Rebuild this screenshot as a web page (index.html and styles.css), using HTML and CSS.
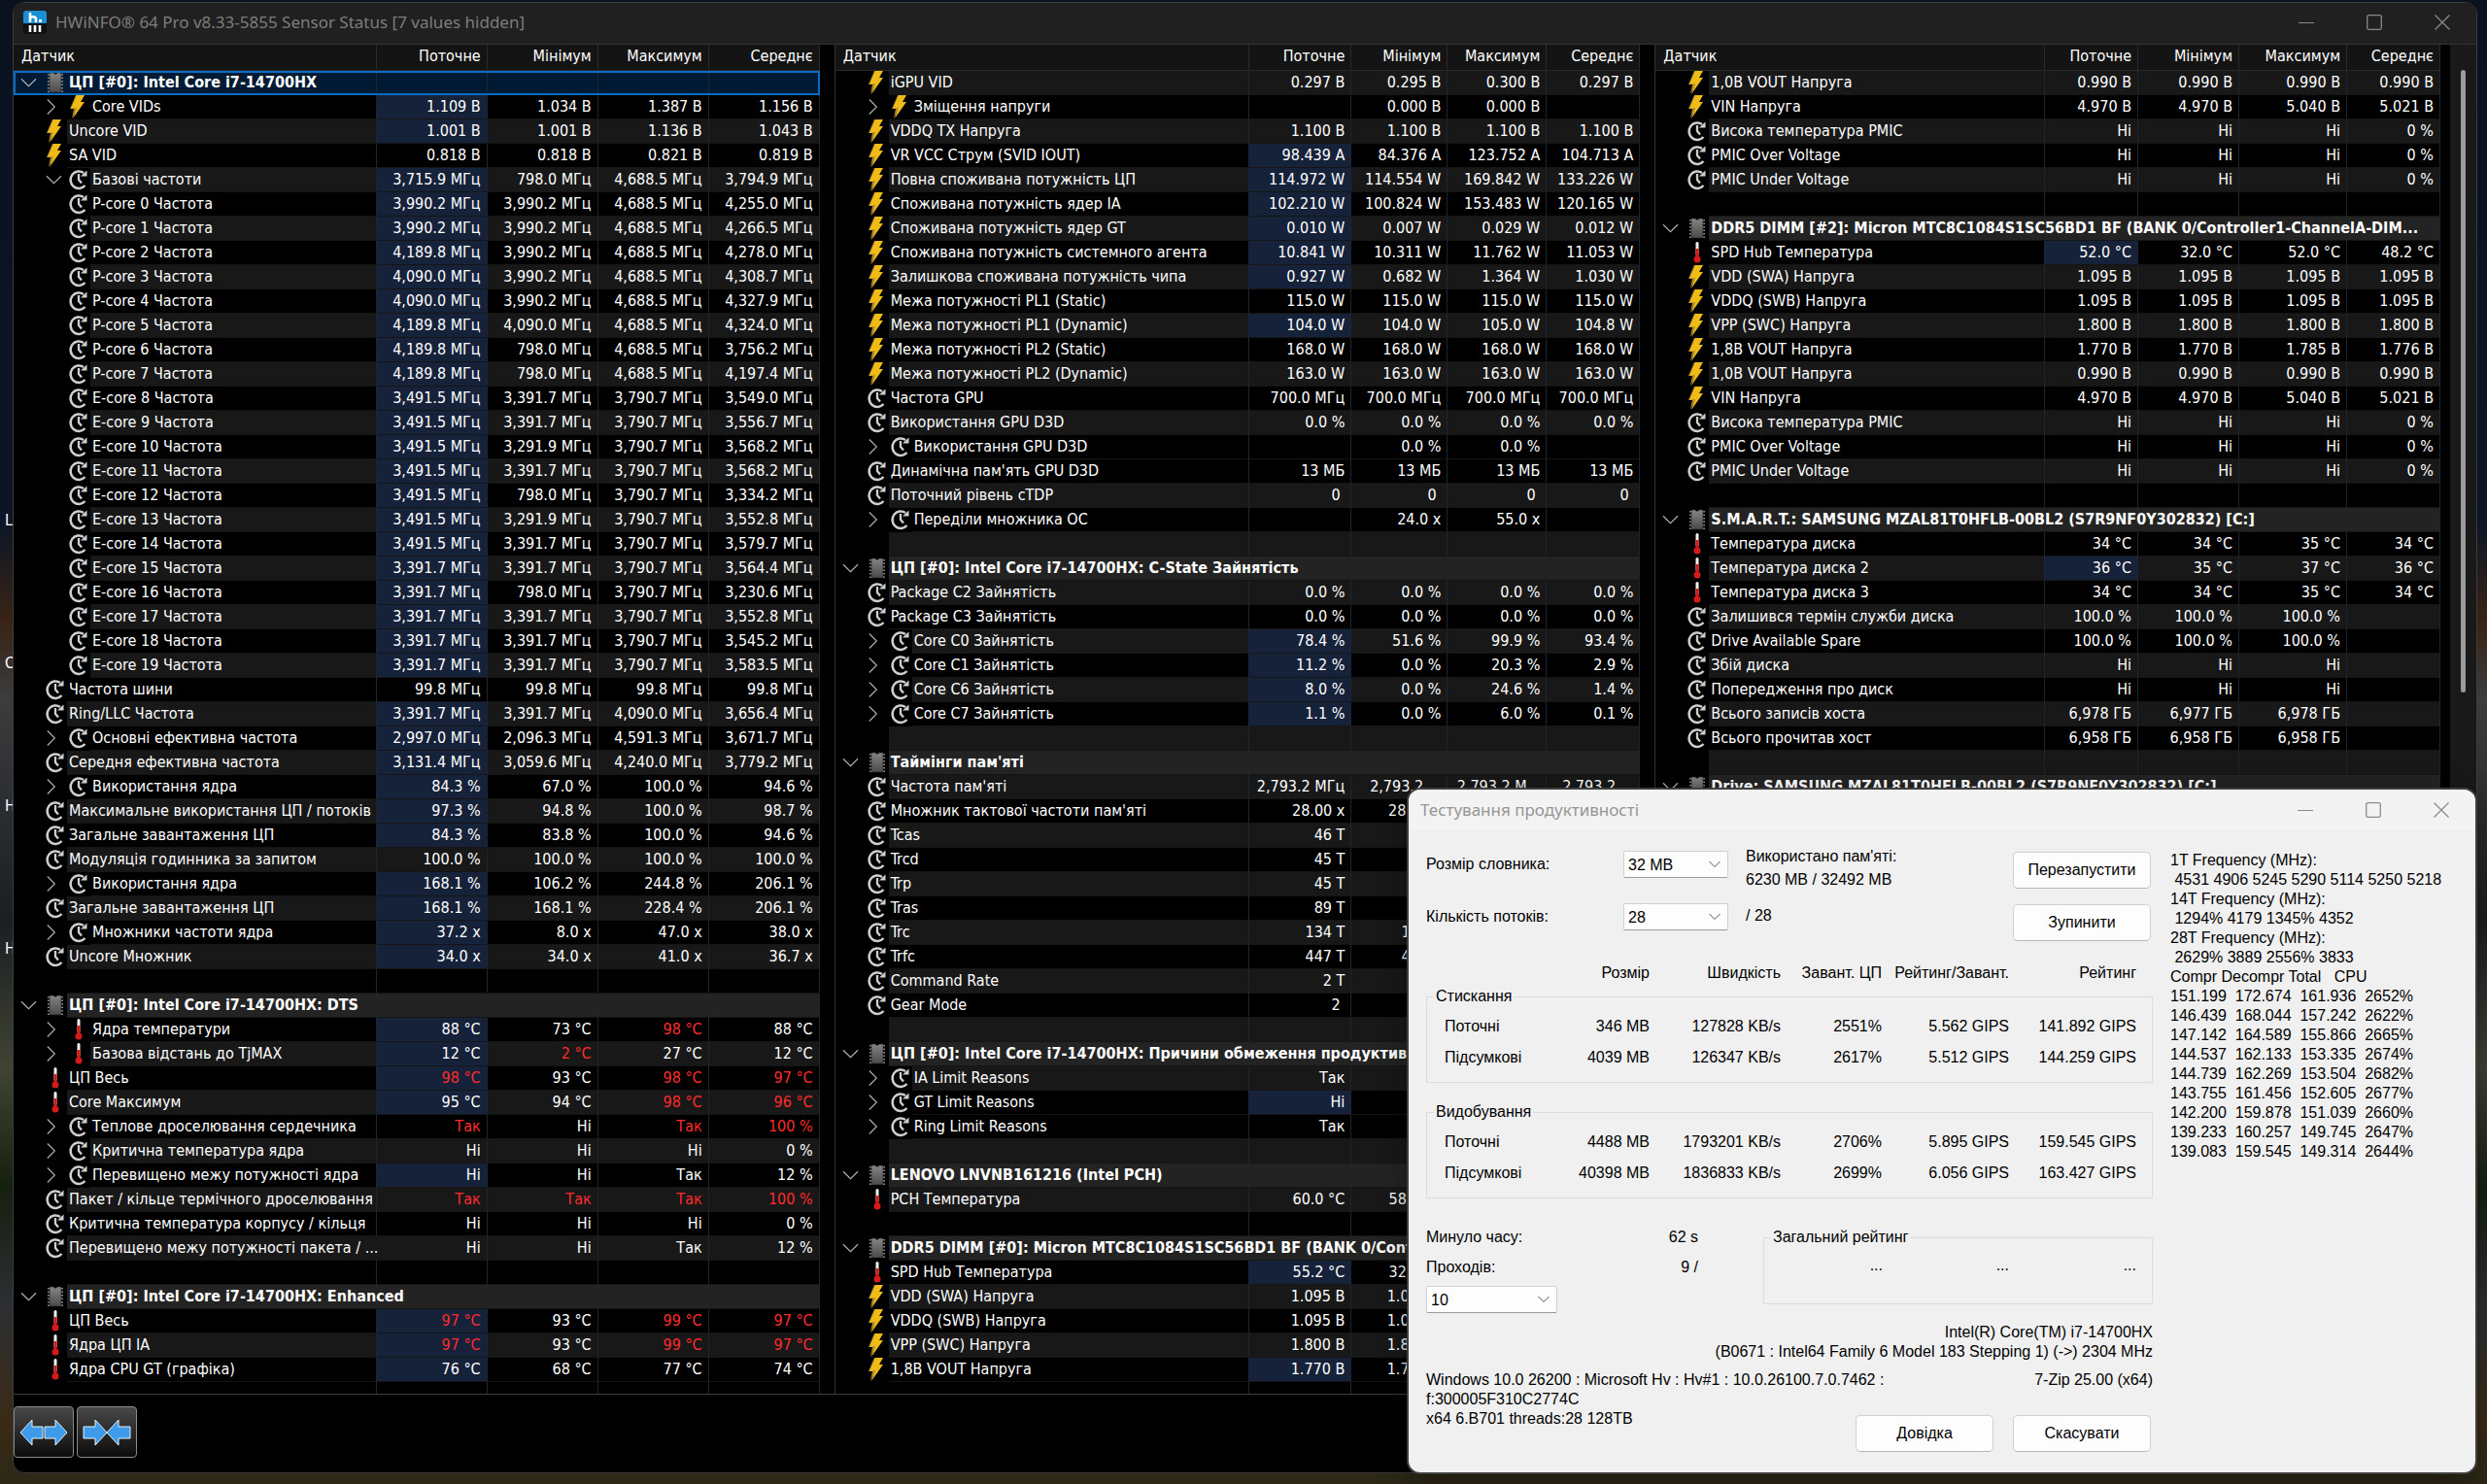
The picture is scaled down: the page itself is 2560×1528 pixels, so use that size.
FILE: index.html
```html
<!doctype html>
<html lang="uk">
<head>
    <meta charset="UTF-8">
    <title>HWiNFO Sensor Status</title>
    <link rel="stylesheet" href="styles.css">
</head>
<body>
    <svg class="sprite" aria-hidden="true">
        <defs>
            <linearGradient id="chip-body" x1="0" y1="0" x2="0" y2="1">
                <stop offset="0" stop-color="#858585"/>
                <stop offset="1" stop-color="#4a4a4a"/>
            </linearGradient>
        </defs>
        <symbol id="bolt" viewBox="0 0 24 24">
            <path fill="#a98a3a" d="M9 0h3L8 12l3 1-6 11 2-10H3z"/>
            <path fill="#f1bb16" d="M10 0h8l-4 7h4L6 24l4-11-6 1z"/>
        </symbol>
        <symbol id="clock" viewBox="0 0 24 24">
            <path fill="none" stroke="#cfcfcf" stroke-width="2.500" d="M17 5A8.500 8.800 0 1 0 18.500 18"/>
            <path fill="#cfcfcf" d="M14 8.500h6.500V2.500z"/>
            <path fill="none" stroke="#cfcfcf" stroke-width="2.300" d="M12 6V12l3 3.500"/>
        </symbol>
        <symbol id="chip" viewBox="0 0 24 24">
            <path stroke="#8d8d8d" stroke-width="16" stroke-dasharray="1.500 2" d="M12 3v19"/>
            <path fill="url(#chip-body)" stroke="#222" stroke-width=".6" d="M6 2h4.500a1.500 1.500 0 0 0 3 0H18v20H6z"/>
        </symbol>
        <symbol id="temp" viewBox="0 0 24 24">
            <rect x="10.500" y="1" width="3" height="14" rx="1.500" fill="#f2f2f2"/>
            <rect x="10.500" y="8" width="3" height="10" fill="#d61a1a"/>
            <circle cx="12" cy="19" r="3.500" fill="#d61a1a"/>
        </symbol>
        <symbol id="down" viewBox="0 0 24 24">
            <path fill="none" stroke="#b5b5b5" stroke-width="1.300" d="M3 7.500l9 9 9-9"/>
        </symbol>
        <symbol id="right" viewBox="0 0 24 24">
            <path fill="none" stroke="#b5b5b5" stroke-width="1.300" d="M4 3l9 9-9 9"/>
        </symbol>
        <symbol id="minimize" viewBox="0 0 16 16"><path stroke="currentColor" d="M0 8.500h16"/></symbol>
        <symbol id="maximize" viewBox="0 0 16 16"><rect x=".7" y=".7" width="14.600" height="14.600" rx="1.500" fill="none" stroke="currentColor" stroke-width="1.300"/></symbol>
        <symbol id="close" viewBox="0 0 16 16"><path fill="none" stroke="currentColor" stroke-width="1.300" d="M.5.5l15 15M15.500.5l-15 15"/></symbol>
    </svg>

    <div class="desktop-labels" aria-hidden="true">
        <span>L</span>
        <span>C</span>
        <span>H</span>
        <span>H</span>
    </div>

    <main class="window">
        <header class="titlebar">
            <svg class="app-icon" viewBox="0 0 24 24">
                <rect width="24" height="24" rx="3" fill="#111"/>
                <path fill="#1b8fd6" d="M3 0h18a3 3 0 0 1 3 3v10H0V3a3 3 0 0 1 3-3z"/>
                <path fill="none" stroke="#fff" stroke-width="2.600" d="M7 2v10M7 8.500c0-3 6-3 6 0V12"/>
                <rect x="16" y="9" width="3" height="3" fill="#fff"/>
                <path stroke="#fff" stroke-width="2.600" d="M7 15v7M12 15v7M17 15v7"/>
            </svg>
            <h1>HWiNFO® 64 Pro v8.33-5855 Sensor Status [7 values hidden]</h1>
            <div class="window-controls">
                <button type="button" aria-label="Згорнути"><svg><use href="#minimize"/></svg></button>
                <button type="button" aria-label="Розгорнути"><svg><use href="#maximize"/></svg></button>
                <button type="button" aria-label="Закрити"><svg><use href="#close"/></svg></button>
            </div>
        </header>

        <div class="panels">
            <section class="panel panel-a"><table id="panel-a"></table></section>
            <section class="panel panel-b"><table id="panel-b"></table></section>
            <section class="panel panel-c">
                <table id="panel-c"></table>
                <div class="scrollbar"><div class="thumb"></div></div>
            </section>
        </div>

        <footer class="toolbar">
            <button type="button" aria-label="Розширити">
                <svg viewBox="0 0 50 28"><path d="M1 14L13 1v7h11v12H13v7zM49 14L37 1v7H26v12h11v7z"/></svg>
            </button>
            <button type="button" aria-label="Звузити">
                <svg viewBox="0 0 50 28"><path d="M25 14L13 1v7H1v12h12v7zM25 14L37 1v7h12v12H37v7z"/></svg>
            </button>
        </footer>
    </main>

    <div class="dialog" role="dialog" aria-labelledby="dialog-title">
        <header class="dialog-title">
            <h2 id="dialog-title">Тестування продуктивності</h2>
            <div class="window-controls">
                <button type="button" aria-label="Згорнути"><svg><use href="#minimize"/></svg></button>
                <button type="button" aria-label="Розгорнути"><svg><use href="#maximize"/></svg></button>
                <button type="button" aria-label="Закрити"><svg><use href="#close"/></svg></button>
            </div>
        </header>
        <div class="dialog-body">
            <form class="bench">
                <div class="settings">
                    <label for="dict">Розмір словника:</label>
                    <select id="dict"><option>32 MB</option></select>
                    <p>Використано пам'яті:<br>6230 MB / 32492 MB</p>
                    <button type="button" class="btn">Перезапустити</button>
                    <label for="threads">Кількість потоків:</label>
                    <select id="threads"><option>28</option></select>
                    <p class="single">/ 28</p>
                    <button type="button" class="btn">Зупинити</button>
                </div>

                <table class="results results-head">
                    <tr><th></th><th>Розмір</th><th>Швидкість</th><th>Завант. ЦП</th><th>Рейтинг/Завант.</th><th>Рейтинг</th></tr>
                </table>
                <fieldset>
                    <legend>Стискання</legend>
                    <table class="results">
                        <tr><th>Поточні</th><td>346 MB</td><td>127828 KB/s</td><td>2551%</td><td>5.562 GIPS</td><td>141.892 GIPS</td></tr>
                        <tr><th>Підсумкові</th><td>4039 MB</td><td>126347 KB/s</td><td>2617%</td><td>5.512 GIPS</td><td>144.259 GIPS</td></tr>
                    </table>
                </fieldset>
                <fieldset>
                    <legend>Видобування</legend>
                    <table class="results">
                        <tr><th>Поточні</th><td>4488 MB</td><td>1793201 KB/s</td><td>2706%</td><td>5.895 GIPS</td><td>159.545 GIPS</td></tr>
                        <tr><th>Підсумкові</th><td>40398 MB</td><td>1836833 KB/s</td><td>2699%</td><td>6.056 GIPS</td><td>163.427 GIPS</td></tr>
                    </table>
                </fieldset>

                <div class="summary">
                    <div class="progress">
                        <div class="pair"><span>Минуло часу:</span><span>62 s</span></div>
                        <div class="pair"><label for="passes">Проходів:</label><span>9 /</span></div>
                        <select id="passes"><option>10</option></select>
                    </div>
                    <fieldset>
                        <legend>Загальний рейтинг</legend>
                        <div class="totals"><span>...</span><span>...</span><span>...</span></div>
                    </fieldset>
                </div>

                <p class="cpu">Intel(R) Core(TM) i7-14700HX<br>(B0671 : Intel64 Family 6 Model 183 Stepping 1) (-&gt;) 2304 MHz</p>
                <div class="system">
                    <p>Windows 10.0 26200 : Microsoft Hv : Hv#1 : 10.0.26100.7.0.7462 :<br>f:300005F310C2774C<br>x64 6.B701 threads:28 128TB</p>
                    <p>7-Zip 25.00 (x64)</p>
                </div>
                <div class="actions">
                    <button type="button" class="btn">Довідка</button>
                    <button type="button" class="btn">Скасувати</button>
                </div>
            </form>
            <pre class="log">1T Frequency (MHz):
 4531 4906 5245 5290 5114 5250 5218
14T Frequency (MHz):
 1294% 4179 1345% 4352
28T Frequency (MHz):
 2629% 3889 2556% 3833
Compr Decompr Total   CPU
151.199  172.674  161.936  2652%
146.439  168.044  157.242  2622%
147.142  164.589  155.866  2665%
144.537  162.133  153.335  2674%
144.739  162.269  153.504  2682%
143.755  161.456  152.605  2677%
142.200  159.878  151.039  2660%
139.233  160.257  149.745  2647%
139.083  159.545  149.314  2644%</pre>
        </div>
    </div>

    <script src="sensors.js"></script>
</body>
</html>
```
FILE: sensors.js
```js
// One line per row: kind|icon|name|current|minimum|maximum|average
// kinds: g group, s sensor, x collapsed, o expanded, c child, - spacer
// "=" after the kind keeps the stripe of the row above,
// "*" marks a value that has just changed, "!" marks a value over its limit
const sensors = {
    'panel-a': `
g!|chip|ЦП [#0]: Intel Core i7-14700HX
x|bolt|Core VIDs|*1.109 В|1.034 В|1.387 В|1.156 В
s|bolt|Uncore VID|*1.001 В|1.001 В|1.136 В|1.043 В
s|bolt|SA VID|0.818 В|0.818 В|0.821 В|0.819 В
o|clock|Базові частоти|*3,715.9 МГц|798.0 МГц|4,688.5 МГц|3,794.9 МГц
c|clock|P-core 0 Частота|*3,990.2 МГц|3,990.2 МГц|4,688.5 МГц|4,255.0 МГц
c|clock|P-core 1 Частота|*3,990.2 МГц|3,990.2 МГц|4,688.5 МГц|4,266.5 МГц
c|clock|P-core 2 Частота|*4,189.8 МГц|3,990.2 МГц|4,688.5 МГц|4,278.0 МГц
c|clock|P-core 3 Частота|*4,090.0 МГц|3,990.2 МГц|4,688.5 МГц|4,308.7 МГц
c|clock|P-core 4 Частота|*4,090.0 МГц|3,990.2 МГц|4,688.5 МГц|4,327.9 МГц
c|clock|P-core 5 Частота|*4,189.8 МГц|4,090.0 МГц|4,688.5 МГц|4,324.0 МГц
c|clock|P-core 6 Частота|*4,189.8 МГц|798.0 МГц|4,688.5 МГц|3,756.2 МГц
c|clock|P-core 7 Частота|*4,189.8 МГц|798.0 МГц|4,688.5 МГц|4,197.4 МГц
c|clock|E-core 8 Частота|*3,491.5 МГц|3,391.7 МГц|3,790.7 МГц|3,549.0 МГц
c|clock|E-core 9 Частота|*3,491.5 МГц|3,391.7 МГц|3,790.7 МГц|3,556.7 МГц
c|clock|E-core 10 Частота|*3,491.5 МГц|3,291.9 МГц|3,790.7 МГц|3,568.2 МГц
c|clock|E-core 11 Частота|*3,491.5 МГц|3,391.7 МГц|3,790.7 МГц|3,568.2 МГц
c|clock|E-core 12 Частота|*3,491.5 МГц|798.0 МГц|3,790.7 МГц|3,334.2 МГц
c|clock|E-core 13 Частота|*3,491.5 МГц|3,291.9 МГц|3,790.7 МГц|3,552.8 МГц
c|clock|E-core 14 Частота|*3,491.5 МГц|3,391.7 МГц|3,790.7 МГц|3,579.7 МГц
c|clock|E-core 15 Частота|*3,391.7 МГц|3,391.7 МГц|3,790.7 МГц|3,564.4 МГц
c|clock|E-core 16 Частота|*3,391.7 МГц|798.0 МГц|3,790.7 МГц|3,230.6 МГц
c|clock|E-core 17 Частота|*3,391.7 МГц|3,391.7 МГц|3,790.7 МГц|3,552.8 МГц
c|clock|E-core 18 Частота|*3,391.7 МГц|3,391.7 МГц|3,790.7 МГц|3,545.2 МГц
c|clock|E-core 19 Частота|*3,391.7 МГц|3,391.7 МГц|3,790.7 МГц|3,583.5 МГц
s|clock|Частота шини|99.8 МГц|99.8 МГц|99.8 МГц|99.8 МГц
s|clock|Ring/LLC Частота|*3,391.7 МГц|3,391.7 МГц|4,090.0 МГц|3,656.4 МГц
x|clock|Основні ефективна частота|*2,997.0 МГц|2,096.3 МГц|4,591.3 МГц|3,671.7 МГц
s|clock|Середня ефективна частота|*3,131.4 МГц|3,059.6 МГц|4,240.0 МГц|3,779.2 МГц
x|clock|Використання ядра|*84.3 %|67.0 %|100.0 %|94.6 %
s|clock|Максимальне використання ЦП / потоків|*97.3 %|94.8 %|100.0 %|98.7 %
s|clock|Загальне завантаження ЦП|*84.3 %|83.8 %|100.0 %|94.6 %
s|clock|Модуляція годинника за запитом|100.0 %|100.0 %|100.0 %|100.0 %
x|clock|Використання ядра|*168.1 %|106.2 %|244.8 %|206.1 %
s|clock|Загальне завантаження ЦП|*168.1 %|168.1 %|228.4 %|206.1 %
x|clock|Множники частоти ядра|*37.2 x|8.0 x|47.0 x|38.0 x
s|clock|Uncore Множник|*34.0 x|34.0 x|41.0 x|36.7 x
-
g|chip|ЦП [#0]: Intel Core i7-14700HX: DTS
x|temp|Ядра температури|*88 °C|73 °C|!98 °C|88 °C
x|temp|Базова відстань до TjMAX|*12 °C|!2 °C|27 °C|12 °C
s|temp|ЦП Весь|*!98 °C|93 °C|!98 °C|!97 °C
s|temp|Core Максимум|*95 °C|94 °C|!98 °C|!96 °C
x|clock|Теплове дроселювання сердечника|!Так|Ні|!Так|!100 %
x|clock|Критична температура ядра|Ні|Ні|Ні|0 %
x|clock|Перевищено межу потужності ядра|*Ні|Ні|Так|12 %
s|clock|Пакет / кільце термічного дроселювання|!Так|!Так|!Так|!100 %
s|clock|Критична температура корпусу / кільця|Ні|Ні|Ні|0 %
s|clock|Перевищено межу потужності пакета / ...|Ні|Ні|Так|12 %
-
g|chip|ЦП [#0]: Intel Core i7-14700HX: Enhanced
s|temp|ЦП Весь|*!97 °C|93 °C|!99 °C|!97 °C
s|temp|Ядра ЦП IA|*!97 °C|93 °C|!99 °C|!97 °C
s|temp|Ядра CPU GT (графіка)|*76 °C|68 °C|77 °C|74 °C
-=`,
    'panel-b': `
s|bolt|iGPU VID|0.297 В|0.295 В|0.300 В|0.297 В
x|bolt|Зміщення напруги||0.000 В|0.000 В|
s|bolt|VDDQ TX Напруга|1.100 В|1.100 В|1.100 В|1.100 В
s|bolt|VR VCC Струм (SVID IOUT)|*98.439 A|84.376 A|123.752 A|104.713 A
s|bolt|Повна споживана потужність ЦП|*114.972 W|114.554 W|169.842 W|133.226 W
s|bolt|Споживана потужність ядер IA|*102.210 W|100.824 W|153.483 W|120.165 W
s|bolt|Споживана потужність ядер GT|*0.010 W|0.007 W|0.029 W|0.012 W
s|bolt|Споживана потужність системного агента|*10.841 W|10.311 W|11.762 W|11.053 W
s|bolt|Залишкова споживана потужність чипа|*0.927 W|0.682 W|1.364 W|1.030 W
s|bolt|Межа потужності PL1 (Static)|115.0 W|115.0 W|115.0 W|115.0 W
s|bolt|Межа потужності PL1 (Dynamic)|*104.0 W|104.0 W|105.0 W|104.8 W
s|bolt|Межа потужності PL2 (Static)|168.0 W|168.0 W|168.0 W|168.0 W
s|bolt|Межа потужності PL2 (Dynamic)|163.0 W|163.0 W|163.0 W|163.0 W
s|clock|Частота GPU|700.0 МГц|700.0 МГц|700.0 МГц|700.0 МГц
s|clock|Використання GPU D3D|0.0 %|0.0 %|0.0 %|0.0 %
x|clock|Використання GPU D3D||0.0 %|0.0 %|
s=|clock|Динамічна пам'ять GPU D3D|13 МБ|13 МБ|13 МБ|13 МБ
s|clock|Поточний рівень cTDP|0\u00a0|0\u00a0|0\u00a0|0\u00a0
x|clock|Переділи множника ОС||24.0 x|55.0 x|
-
g|chip|ЦП [#0]: Intel Core i7-14700HX: C-State Зайнятість
s|clock|Package C2 Зайнятість|0.0 %|0.0 %|0.0 %|0.0 %
s|clock|Package C3 Зайнятість|0.0 %|0.0 %|0.0 %|0.0 %
x|clock|Core C0 Зайнятість|*78.4 %|51.6 %|99.9 %|93.4 %
x|clock|Core C1 Зайнятість|*11.2 %|0.0 %|20.3 %|2.9 %
x|clock|Core C6 Зайнятість|*8.0 %|0.0 %|24.6 %|1.4 %
x|clock|Core C7 Зайнятість|*1.1 %|0.0 %|6.0 %|0.1 %
-
g|chip|Таймінги пам'яті
s|clock|Частота пам'яті|2,793.2 МГц|2,793.2 ...|2,793.2 М...|2,793.2 ...
s|clock|Множник тактової частоти пам'яті|28.00 x|28.00 x|28.00 x|28.00 x
s|clock|Tcas|46 T|46 T|46 T|46 T
s|clock|Trcd|45 T|45 T|45 T|45 T
s|clock|Trp|45 T|45 T|45 T|45 T
s|clock|Tras|89 T|89 T|89 T|89 T
s|clock|Trc|134 T|134 T|134 T|134 T
s|clock|Trfc|447 T|447 T|447 T|447 T
s|clock|Command Rate|2 T|2 T|2 T|2 T
s|clock|Gear Mode|2\u00a0|2\u00a0|2\u00a0|2\u00a0
-
g|chip|ЦП [#0]: Intel Core i7-14700HX: Причини обмеження продуктивності
x|clock|IA Limit Reasons|Так|Ні|Так|
x|clock|GT Limit Reasons|*Ні|Ні|Так|
x=|clock|Ring Limit Reasons|Так|Ні|Так|
-
g|chip|LENOVO LNVNB161216 (Intel PCH)
s|temp|PCH Температура|60.0 °C|58.0 °C|60.0 °C|59.0 °C
-
g|chip|DDR5 DIMM [#0]: Micron MTC8C1084S1SC56BD1 BF (BANK 0/Controller0-ChannelA-DIM...
s|temp|SPD Hub Температура|*55.2 °C|32.0 °C|55.2 °C|50.0 °C
s|bolt|VDD (SWA) Напруга|1.095 В|1.095 В|1.095 В|1.095 В
s|bolt|VDDQ (SWB) Напруга|1.095 В|1.095 В|1.095 В|1.095 В
s|bolt|VPP (SWC) Напруга|1.800 В|1.800 В|1.800 В|1.800 В
s|bolt|1,8В VOUT Напруга|*1.770 В|1.770 В|1.785 В|1.776 В
-=`,
    'panel-c': `
s|bolt|1,0В VOUT Напруга|0.990 В|0.990 В|0.990 В|0.990 В
s|bolt|VIN Напруга|4.970 В|4.970 В|5.040 В|5.021 В
s|clock|Висока температура PMIC|Ні|Ні|Ні|0 %
s|clock|PMIC Over Voltage|Ні|Ні|Ні|0 %
s|clock|PMIC Under Voltage|Ні|Ні|Ні|0 %
-
g|chip|DDR5 DIMM [#2]: Micron MTC8C1084S1SC56BD1 BF (BANK 0/Controller1-ChannelA-DIM...
s|temp|SPD Hub Температура|*52.0 °C|32.0 °C|52.0 °C|48.2 °C
s|bolt|VDD (SWA) Напруга|1.095 В|1.095 В|1.095 В|1.095 В
s|bolt|VDDQ (SWB) Напруга|1.095 В|1.095 В|1.095 В|1.095 В
s|bolt|VPP (SWC) Напруга|1.800 В|1.800 В|1.800 В|1.800 В
s|bolt|1,8В VOUT Напруга|1.770 В|1.770 В|1.785 В|1.776 В
s|bolt|1,0В VOUT Напруга|0.990 В|0.990 В|0.990 В|0.990 В
s|bolt|VIN Напруга|4.970 В|4.970 В|5.040 В|5.021 В
s|clock|Висока температура PMIC|Ні|Ні|Ні|0 %
s|clock|PMIC Over Voltage|Ні|Ні|Ні|0 %
s|clock|PMIC Under Voltage|Ні|Ні|Ні|0 %
-
g|chip|S.M.A.R.T.: SAMSUNG MZAL81T0HFLB-00BL2 (S7R9NF0Y302832) [C:]
s|temp|Температура диска|34 °C|34 °C|35 °C|34 °C
s|temp|Температура диска 2|*36 °C|35 °C|37 °C|36 °C
s|temp|Температура диска 3|34 °C|34 °C|35 °C|34 °C
s|clock|Залишився термін служби диска|100.0 %|100.0 %|100.0 %|
s|clock|Drive Available Spare|100.0 %|100.0 %|100.0 %|
s|clock|Збій диска|Ні|Ні|Ні|
s|clock|Попередження про диск|Ні|Ні|Ні|
s|clock|Всього записів хоста|6,978 ГБ|6,977 ГБ|6,978 ГБ|
s|clock|Всього прочитав хост|6,958 ГБ|6,958 ГБ|6,958 ГБ|
-
g|chip|Drive: SAMSUNG MZAL81T0HFLB-00BL2 (S7R9NF0Y302832) [C:]`
};

const arrows = { o: 'down', x: 'right' };

function icon(name, cls) {
    return `<svg class="${cls}"><use href="#${name}"/></svg>`;
}

function valueCell(text = '') {
    const cls = [];
    if (text[0] === '*') {
        cls.push('changed');
        text = text.slice(1);
    }
    if (text[0] === '!') {
        cls.push('alert');
        text = text.slice(1);
    }
    return `<td class="${cls.join(' ')}">${text}</td>`;
}

function nameCell(kind, image, name) {
    if (kind === '-') {
        return '<span class="indent"></span><span class="indent-icon"></span><span class="label"></span>';
    }
    let cell = kind === 'g' ? icon('down', 'arrow-group') : '<span class="indent"></span>';
    if (arrows[kind]) cell += icon(arrows[kind], 'arrow');
    if (kind === 'c') cell += '<span class="indent-icon"></span>';
    return cell + icon(image, 'icon') + `<span class="label">${name}</span>`;
}

function row(line, striped) {
    const [kind, image, name, ...values] = line.split('|');
    const cls = [];
    if (striped) cls.push('striped');
    if (kind[0] === 'g') cls.push('group');
    if (kind === 'g!') cls.push('selected');
    const cells = [0, 1, 2, 3].map(i => valueCell(values[i])).join('');
    return `<tr class="${cls.join(' ')}"><td class="name"><div class="name-inner">${nameCell(kind[0], image, name)}</div></td>${cells}</tr>`;
}

for (const [id, text] of Object.entries(sensors)) {
    let striped = true;
    const rows = text.trim().split('\n').map((line, i) => {
        if (i && line.split('|')[0][1] !== '=') striped = !striped;
        return row(line, striped);
    });
    document.getElementById(id).innerHTML =
        '<thead><tr><th class="name">Датчик</th><th>Поточне</th><th>Мінімум</th><th>Максимум</th><th>Середнє</th></tr></thead>' +
        `<tbody>${rows.join('')}</tbody>`;
}
```
FILE: styles.css
```css
* {
    box-sizing: border-box;
}

body {
    margin: 0;
    height: 100vh;
    padding: 2px 10px 11px 13px;
    overflow: hidden;
    position: relative;
    font-family: "DejaVu Sans Condensed", "DejaVu Sans", sans-serif;
    font-size: 16px;
    color: #fff;
    background: linear-gradient(180deg, #0a1220 0%, #0b1526 35%, #3a2415 42%, #3a3c3e 47%, #1c1f22 62%, #3f4434 72%, #16200f 80%, #2d2f33 88%, #3a2a14 96%, #2b2817 100%);
}

h1, h2, p, pre {
    margin: 0;
    font-weight: normal;
}

.sprite {
    position: absolute;
    width: 0;
    height: 0;
}

/* captions of desktop icons that stick out from under the window */
.desktop-labels {
    position: absolute;
    left: 5px;
    top: 526px;
    display: flex;
    flex-direction: column;
    gap: 127px;
    line-height: 20px;
}

/* main window */
.window {
    position: relative;
    display: flex;
    flex-direction: column;
    height: 100%;
    background: #000;
    border: 1px solid #3c3c3c;
    border-radius: 12px;
    overflow: hidden;
}

.titlebar {
    display: flex;
    align-items: center;
    flex: none;
    height: 42px;
    padding-left: 10px;
    padding-bottom: 3px;
    gap: 9px;
    background: #202020;
}

.titlebar h1 {
    flex: 1;
    font-family: "Noto Sans", sans-serif;
    font-size: 17px;
    color: #7d7d7d;
}

.app-icon {
    width: 24px;
    height: 24px;
}

.window-controls {
    display: flex;
    color: #8a8a8a;
}

.window-controls button {
    display: flex;
    align-items: center;
    justify-content: center;
    width: 70px;
    height: 38px;
    padding: 0;
    border: none;
    background: none;
    color: inherit;
}

.window-controls svg {
    width: 16px;
    height: 16px;
}

.panels {
    display: grid;
    grid-template-columns: minmax(0, 845fr) minmax(0, 845fr) minmax(0, 846fr);
    flex: 1;
    min-height: 0;
    border-bottom: 1px solid #3a3a3a;
}

.panel {
    display: flex;
    align-items: flex-start;
    overflow: hidden;
    padding-right: 15px;
    border-top: 1px solid #333;
}

.panel + .panel {
    border-left: 1px solid #333;
}

.panel-c {
    padding-right: 0;
    align-items: stretch;
}

.panel table {
    flex: 1;
    width: 0;
    table-layout: fixed;
    border-collapse: separate;
    border-spacing: 0;
}

.panel-c table {
    align-self: flex-start;
    margin-right: 10px;
}

.panel th,
.panel td {
    width: 114px;
    height: 25px;
    padding: 0 6px 0 0;
    line-height: 24px;
    text-align: right;
    white-space: nowrap;
    font-weight: normal;
    border-right: 1px solid #1d2630;
    border-bottom: 1px solid #151515;
}

.panel-b th {
    width: 102px;
}

.panel-b th:nth-child(2) {
    width: 105px;
}

.panel-b th:nth-child(3) {
    width: 99px;
}

.panel-c th {
    width: 104px;
}

.panel-c th:nth-child(4) {
    width: 111px;
}

.panel-b th:nth-child(5),
.panel-c th:nth-child(2),
.panel-c th:nth-child(5) {
    width: 96px;
}

.panel th {
    height: 27px;
    padding-bottom: 2px;
    background: #141414;
    border-color: #2b2b2b;
}

.panel th.name {
    width: auto;
    padding-left: 8px;
    text-align: left;
}

.panel td.name {
    width: auto;
    padding: 0;
    text-align: left;
    border-bottom: none;
}

.name-inner {
    display: flex;
    height: 25px;
}

.indent,
.arrow-group {
    flex: none;
    width: 31px;
}

.indent-icon,
.arrow,
.icon {
    flex: none;
    width: 24px;
    height: 24px;
}

.arrow-group {
    height: 24px;
    padding: 2px 5px;
}

.arrow {
    padding: 2px 3px 2px 0;
}

.label {
    flex: 1;
    padding-left: 2px;
    border-bottom: 1px solid #151515;
}

.striped td:not(.name),
.striped .label {
    background: #181818;
}

.group td:not(.name),
.group .label {
    background: #232323;
}

.group .label {
    font-weight: bold;
}

.panel td.changed {
    background: #16213a;
}

.alert {
    color: #ff2b2b;
}

.panel .selected {
    outline: 2px solid #0a6cc4;
    outline-offset: -2px;
}

.panel .selected td,
.panel .selected .label {
    background: #001b33;
    border-bottom-color: #001b33;
}

.scrollbar {
    display: flex;
    justify-content: center;
    flex: none;
    width: 27px;
    padding-top: 26px;
    background: #191919;
}

.thumb {
    width: 5px;
    height: 47%;
    border-radius: 3px;
    background: #9a9a9a;
}

.toolbar {
    display: flex;
    flex: none;
    gap: 3px;
    height: 80px;
    padding-top: 12px;
}

.toolbar button {
    display: flex;
    align-items: center;
    justify-content: center;
    width: 62px;
    height: 53px;
    padding: 0;
    border: 1px solid #8a8a8a;
    border-radius: 4px;
    background: linear-gradient(#484848, #0c0c0c);
}

.toolbar svg {
    width: 50px;
    height: 28px;
    fill: #3d9be9;
    stroke: #e8f3fc;
}

/* benchmark dialog */
.dialog {
    position: absolute;
    right: 12px;
    bottom: 12px;
    width: 1098px;
    overflow: hidden;
    border-radius: 12px;
    background: #f0f0f0;
    box-shadow: 0 0 0 2px #3f3f3f, 0 8px 30px rgba(0, 0, 0, 0.4);
    color: #000;
    font-family: "Liberation Sans", Arial, sans-serif;
    line-height: 20px;
}

.dialog-title {
    display: flex;
    align-items: center;
    justify-content: space-between;
    height: 42px;
    padding-left: 12px;
    background: #f3f3f3;
}

.dialog-title h2 {
    font-family: "Noto Sans", sans-serif;
    font-size: 17px;
    color: #969696;
}

.dialog-body {
    display: flex;
    gap: 18px;
    padding: 15px 18px 21px;
}

.bench {
    width: 748px;
}

.settings {
    display: grid;
    grid-template-columns: 203px 126px 1fr 142px;
    grid-auto-rows: 54px;
    align-items: start;
    padding-right: 2px;
}

.settings label {
    margin-top: 6px;
    line-height: 28px;
}

.settings p {
    line-height: 24px;
}

.settings .single {
    margin-top: 7px;
}

select {
    width: 108px;
    height: 28px;
    padding: 0 4px;
    appearance: none;
    border: 1px solid #d0d0d0;
    border-bottom-color: #9a9a9a;
    border-radius: 2px;
    color: #000;
    font-family: inherit;
    font-size: 16px;
    background: #fdfdfd url("data:image/svg+xml,%3Csvg xmlns='http://www.w3.org/2000/svg' width='12' height='8' viewBox='0 0 12 8'%3E%3Cpath d='M.5 1l5.500 5.500L11.500 1' fill='none' stroke='%23555'/%3E%3C/svg%3E") no-repeat right 7px center;
}

.settings select {
    margin-top: 6px;
}

.btn {
    width: 142px;
    height: 38px;
    padding: 0;
    border: 1px solid #d0d0d0;
    border-bottom-color: #b5b5b5;
    border-radius: 5px;
    background: #fdfdfd;
    color: #000;
    font-family: inherit;
    font-size: 16px;
}

.settings .btn {
    margin-top: 7px;
}

.results {
    width: 100%;
    table-layout: fixed;
    border-spacing: 0;
}

.results th,
.results td {
    width: 131px;
    height: 32px;
    padding: 0;
    text-align: right;
    white-space: nowrap;
    font-weight: normal;
}

.results th:first-child {
    width: auto;
    padding-left: 18px;
    text-align: left;
}

.results :nth-child(3) {
    width: 135px;
}

.results :nth-child(4) {
    width: 104px;
}

.results-head {
    margin-top: 8px;
    padding-right: 17px;
}

.bench fieldset {
    min-width: 0;
    margin: 0 0 20px;
    padding: 5px 16px 9px 0;
    border: 1px solid #dcdcdc;
}

.bench legend {
    height: 20px;
    margin-left: 7px;
    padding: 0 2px;
}

.results-head + fieldset {
    margin-top: -2px;
}

.summary {
    display: grid;
    grid-template-columns: 280px 401px;
    justify-content: space-between;
    align-items: start;
    margin-top: 30px;
}

.pair {
    display: flex;
    justify-content: space-between;
    margin-bottom: 9px;
}

.pair:first-child {
    margin-bottom: 11px;
}

.progress select {
    width: 135px;
}

.bench .summary fieldset {
    margin: 0;
    padding: 9px 16px 29px 0;
}

.totals {
    display: grid;
    grid-template-columns: 1fr 130px 131px;
    text-align: right;
}

.cpu {
    margin-top: 10px;
    text-align: right;
}

.system {
    display: flex;
    justify-content: space-between;
    margin-top: 9px;
}

.actions {
    display: flex;
    justify-content: flex-end;
    gap: 20px;
    margin-top: -14px;
    padding-right: 2px;
}

.log {
    padding-top: 6px;
    font-family: inherit;
    font-size: 16px;
}
```
